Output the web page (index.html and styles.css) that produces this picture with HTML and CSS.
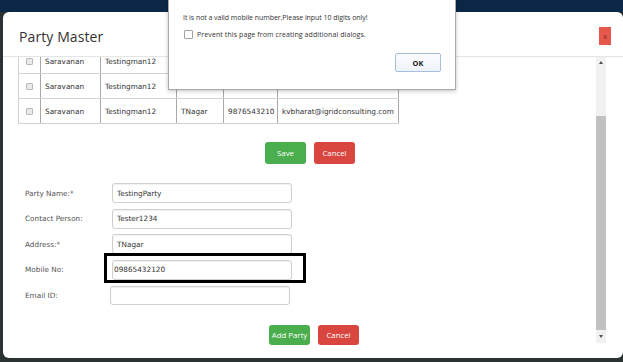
FILE: index.html
```html
<!DOCTYPE html>
<html>
<head>
<meta charset="utf-8">
<link rel="stylesheet" href="styles.css">
</head>
<body>
<div class="topbar"></div>
<div class="modal">
  <div class="modal-header">
    <h4 class="modal-title">Party Master</h4>
    <span class="close">x</span>
  </div>
  <div class="modal-body">
    <div class="content">
      <div class="table-wrap">
        <table class="grid">
          <colgroup>
            <col class="c-chk"><col class="c-name"><col class="c-contact"><col class="c-addr"><col class="c-mob"><col class="c-mail">
          </colgroup>
          <tr><td><span class="chk"></span></td><td>Saravanan</td><td>Testingman12</td><td></td><td></td><td></td></tr>
          <tr><td><span class="chk"></span></td><td>Saravanan</td><td>Testingman12</td><td></td><td></td><td></td></tr>
          <tr><td><span class="chk"></span></td><td>Saravanan</td><td>Testingman12</td><td>TNagar</td><td>9876543210</td><td>kvbharat@igridconsulting.com</td></tr>
        </table>
      </div>
      <div class="actions actions-top">
        <button class="btn btn-green">Save</button>
        <button class="btn btn-red">Cancel</button>
      </div>
      <div class="form">
        <div class="row"><label>Party Name:*</label><div class="input">TestingParty</div></div>
        <div class="row"><label>Contact Person:</label><div class="input">Tester1234</div></div>
        <div class="row"><label>Address:*</label><div class="input">TNagar</div></div>
        <div class="row"><label>Mobile No:</label><div class="input input-mobile">09865432120</div></div>
        <div class="row"><label>Email ID:</label><div class="input input-email"></div></div>
      </div>
      <div class="actions actions-bottom">
        <button class="btn btn-green">Add Party</button>
        <button class="btn btn-red">Cancel</button>
      </div>
    </div>
    <div class="scrollbar">
      <div class="sb-btn sb-up"><span class="tri-up"></span></div>
      <div class="sb-space"></div>
      <div class="sb-thumb"></div>
      <div class="sb-btn sb-down"><span class="tri-down"></span></div>
    </div>
  </div>
</div>
<div class="highlight"></div>
<div class="alert">
  <p class="alert-msg">It is not a valid mobile number.Please input 10 digits only!</p>
  <div class="alert-check"><span class="abox"></span><span>Prevent this page from creating additional dialogs.</span></div>
  <div class="alert-foot"><button class="ok">OK</button></div>
</div>
</body>
</html>
```
FILE: styles.css
```css
* { box-sizing: border-box; }
html, body { margin: 0; padding: 0; }
body {
  width: 623px;
  height: 362px;
  overflow: hidden;
  position: relative;
  background: #2a3233;
  font-family: "DejaVu Sans", Verdana, sans-serif;
}
.topbar { height: 12px; background: #0b2847; }
.modal {
  margin-left: 3px;
  width: 620px;
  height: 346px;
  background: #fff;
  border-radius: 6px;
  display: flex;
  flex-direction: column;
}
.modal-header {
  height: 45px;
  flex: none;
  display: flex;
  align-items: center;
  justify-content: space-between;
  padding: 4px 12px 0 16px;
  border-bottom: 1px solid #e5e5e5;
}
.modal-title {
  margin: 0;
  font-family: "Open Sans", sans-serif;
  font-weight: 400;
  font-size: 14px;
  color: #333;
  letter-spacing: 0.1px;
}
.close {
  width: 12px;
  height: 18px;
  background: #e8574b;
  color: #8a2a22;
  font-family: "Open Sans", sans-serif;
  font-size: 8px;
  line-height: 18px;
  text-align: center;
}
.modal-body {
  flex: 1;
  display: flex;
  min-height: 0;
}
.content {
  flex: 1;
  padding-left: 15px;
  overflow: hidden;
}
.table-wrap { overflow: hidden; }
.grid {
  margin-top: -9px;
  border-collapse: collapse;
  table-layout: fixed;
  width: 380px;
  font-size: 7.3px;
  color: #333;
}
.c-chk { width: 22px; }
.c-name { width: 60px; }
.c-contact { width: 76px; }
.c-addr { width: 47px; }
.c-mob { width: 54px; }
.c-mail { width: 121px; }
.grid td {
  height: 25px;
  padding: 0 4px;
  border-top: 1px solid #d2d2d2;
  border-bottom: 1px solid #d2d2d2;
  border-left: 1px solid #a8a8a8;
  border-right: 1px solid #a8a8a8;
  white-space: nowrap;
  overflow: hidden;
}
.grid td:first-child { border-left-color: #d2d2d2; text-align: center; padding: 0; }
.chk {
  display: inline-block;
  width: 7px;
  height: 7px;
  border: 1px solid #b8b8b8;
  background: #e9e9e9;
  border-radius: 1px;
  vertical-align: middle;
}
.actions { display: flex; gap: 8px; }
.actions-top { margin-top: 18px; padding-left: 247px; }
.actions-bottom { margin-top: 19px; padding-left: 251px; }
.btn {
  border: none;
  border-radius: 3px;
  height: 22px;
  width: 41px;
  padding: 0;
  color: #fff;
  font-family: "Open Sans", sans-serif;
  font-size: 7.8px;
}
.actions-bottom .btn { height: 20px; }
.btn-green { background: #4aad4e; }
.btn-red { background: #d9463f; }
.form {
  margin-top: 19px;
  padding-left: 7px;
  display: flex;
  flex-direction: column;
  gap: 5px;
}
.row { display: flex; align-items: center; height: 20.5px; }
.row label {
  width: 87px;
  font-size: 7.3px;
  color: #555;
}
.input {
  width: 180px;
  height: 20px;
  border: 1px solid #cfcfcf;
  border-radius: 3px;
  box-shadow: inset 0 1px 1px rgba(0,0,0,0.06);
  font-size: 7.3px;
  color: #333;
  padding: 0 4px;
  display: flex;
  align-items: center;
}
.input-mobile { padding-left: 1px; }
.input-email { margin-left: -2px; height: 19px; }
.scrollbar {
  width: 10px;
  margin-right: 17px;
  margin-bottom: 15px;
  background: #f1f1f1;
  display: flex;
  flex-direction: column;
}
.sb-btn { display: flex; align-items: center; justify-content: center; }
.sb-up { height: 10px; }
.sb-down { height: 13px; }
.sb-space { height: 49px; }
.sb-thumb { flex: 1; background: #c1c1c1; }
.tri-up {
  width: 0; height: 0;
  border-left: 2.5px solid transparent;
  border-right: 2.5px solid transparent;
  border-bottom: 3px solid #505050;
}
.tri-down {
  width: 0; height: 0;
  border-left: 2.5px solid transparent;
  border-right: 2.5px solid transparent;
  border-top: 3px solid #505050;
}
.highlight {
  position: absolute;
  left: 104px;
  top: 253px;
  width: 202px;
  height: 30px;
  border: 3px solid #000;
}
.alert {
  position: absolute;
  left: 168px;
  top: -1px;
  width: 288px;
  height: 91px;
  background: #fff;
  border: 1px solid #a9a9a9;
  box-shadow: 0 1px 4px rgba(0,0,0,0.25);
  padding: 0 14px;
  font-family: "Open Sans", "Noto Sans", sans-serif;
  font-size: 7px;
  color: #333;
}
.alert-msg { margin: 13px 0 0; line-height: 10px; letter-spacing: -0.05px; }
.alert-check {
  margin-top: 7px;
  display: flex;
  align-items: center;
  gap: 4px;
  padding-left: 1px;
}
.alert-check span:last-child { letter-spacing: 0.1px; }
.abox {
  width: 9px;
  height: 9px;
  border: 1px solid #a0a0a0;
  border-radius: 1px;
  background: #fff;
}
.alert-foot { display: flex; justify-content: flex-end; margin-top: 14px; }
.ok {
  width: 46px;
  height: 19px;
  padding: 0;
  border: 1px solid #a8bfdc;
  border-radius: 2px;
  background: linear-gradient(#fbfcfe, #eef3f9);
  font-family: "Open Sans", sans-serif;
  font-weight: 700;
  font-size: 7.4px;
  color: #222;
}
```
